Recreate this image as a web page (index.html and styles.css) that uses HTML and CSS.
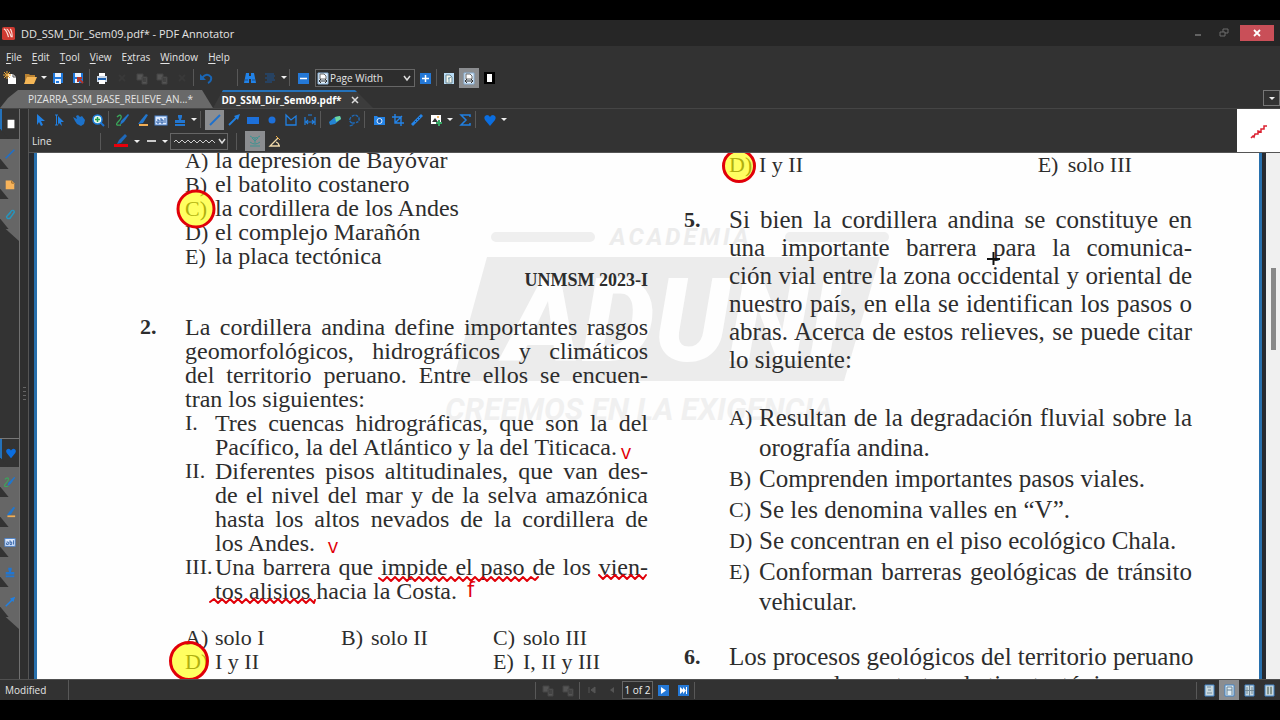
FILE: index.html
```html
<!DOCTYPE html>
<html lang="es">
<head>
<meta charset="utf-8">
<title>DD_SSM_Dir_Sem09.pdf* - PDF Annotator</title>
<link rel="stylesheet" href="styles.css">
</head>
<body>
<svg class="defs" aria-hidden="true">
  <symbol id="new" viewBox="0 0 14 14"><path d="M5 3h5l3 3v7H5z" fill="#fff"/><path d="M10 3v3h3" fill="none" stroke="#555"/><path d="M4 0v8M0 4h8M1 1l6 6M7 1L1 7" stroke="#e9a63a"/></symbol>
  <symbol id="open" viewBox="0 0 14 14"><path d="M2 12V3h4l1 1h5v3" fill="#b98232"/><path d="M4 6h10l-3 7H1z" fill="#f5b757"/></symbol>
  <symbol id="save" viewBox="0 0 14 14"><path d="M2 2h10v10H2z" fill="#1f78dc"/><path d="M4 2h6v4H4zM4 8h6v5H4z" fill="#e8f2ff"/><path d="M5 10h3v2H5z" fill="#1f78dc"/></symbol>
  <symbol id="saveas" viewBox="0 0 14 14"><path d="M2 2h10v10H2z" fill="#1f78dc"/><path d="M4 2h6v4H4zM4 8h4v4H4z" fill="#e8f2ff"/><path d="M7 7l5 5M7 11V7h4" stroke="#b3342b" stroke-width="2" fill="none"/></symbol>
  <symbol id="print" viewBox="0 0 14 14"><path d="M4 2h6v4H4z" fill="#fff"/><path d="M2 5h10v6H2z" fill="#c9d5e4"/><path d="M3 7h8v2H3z" fill="#1b5fae"/><path d="M4 9h6v4H4z" fill="#fff"/></symbol>
  <symbol id="copy" viewBox="0 0 14 14"><path d="M2 3h6v6H2zM7 6h5v7H7z" fill="#555" stroke="#444"/><path d="M8 8h3M8 10h3" stroke="#333"/></symbol>
  <symbol id="cut" viewBox="0 0 14 14"><path d="M4 4l6 6M10 4l-6 6" stroke="#393939" stroke-width="2"/></symbol>
  <symbol id="undo" viewBox="0 0 14 14"><path d="M3 7q5-6 9-1 1 4-3 6" fill="none" stroke="#1a66b5" stroke-width="2"/><path d="M1 3v6h6z" fill="#1a66b5"/></symbol>
  <symbol id="find" viewBox="0 0 14 14"><path d="M3 2h3v3h2V2h3l2 10H8V8H6v4H1z" fill="#2182e8"/><path d="M2 9h3M9 9h3" stroke="#144e92"/></symbol>
  <symbol id="list" viewBox="0 0 14 14"><path d="M2 3h9M4 5h8M2 7h9M4 9h8M2 11h7" stroke="#1c538f" stroke-width="1.2"/></symbol>
  <symbol id="minus" viewBox="0 0 14 14"><path d="M2 2h11v11H2z" fill="#2478d6"/><path d="M4 7.500h7" stroke="#fff" stroke-width="1.500"/></symbol>
  <symbol id="plus" viewBox="0 0 14 14"><path d="M2 2h11v11H2z" fill="#2478d6"/><path d="M4 7.500h7M7.500 4v7" stroke="#fff" stroke-width="1.500"/></symbol>
  <symbol id="page" viewBox="0 0 14 14"><path d="M2 2h10v11H2z" fill="#b9dcf5"/><path d="M4 4h4l2 2v6H4z" fill="#f5f8ee" stroke="#6c8794"/><path d="M6 8l3-2M7 6v5" stroke="#6f99ad"/></symbol>
  <symbol id="pagew" viewBox="0 0 14 14"><path d="M2 2h10v11H2z" fill="#e2effb" stroke="#8bb3d8"/><path d="M4 3h4l2 2v3H4z" fill="#fff" stroke="#666"/><path d="M3 10h8M5 8l-2 2 2 2M9 8l2 2-2 2" stroke="#333" fill="none"/></symbol>
  <symbol id="full" viewBox="0 0 14 14"><path d="M2 1h11v12H2z" fill="#000"/><path d="M5 3h5v8H5z" fill="#fff"/></symbol>
  <symbol id="arrow" viewBox="0 0 14 14"><path d="M3 1l8 7H7l2 4-2 1-2-4-2 3z" fill="#2180e2"/></symbol>
  <symbol id="textarrow" viewBox="0 0 14 14"><path d="M5 3l6 6H8l1 4-3-3-1 2z" fill="#2180e2"/><path d="M2 2h3M3.500 2v10M2 12h3" stroke="#2180e2" fill="none"/></symbol>
  <symbol id="hand" viewBox="0 0 14 14"><path d="M1 4l4 2-1-3 2-1 2 2 2-1 3 4-1 4-3 2-4-2-2-3z" fill="#1d72ca"/></symbol>
  <symbol id="zoomin" viewBox="0 0 14 14"><path d="M9 9l4 4" stroke="#1b72d2" stroke-width="2"/><circle cx="6.500" cy="6.500" r="4.500" fill="#e5f8ef" stroke="#1b7ede" stroke-width="1.500"/><path d="M4 6.500h5M6.500 4v5" stroke="#20a050" stroke-width="1.500"/></symbol>
  <symbol id="pen" viewBox="0 0 14 14"><path d="M13 2L8 9l-4 3 1-4 7-7z" fill="#2276cc"/><path d="M1 4q3-3 4-1T2 9t3 3" fill="none" stroke="#3aa85b" stroke-width="1.300"/></symbol>
  <symbol id="marker" viewBox="0 0 14 14"><path d="M11 1l2 1-5 8-5 1 3-4z" fill="#2276cc"/><path d="M4 11h9v2H4z" fill="#f1ae55"/></symbol>
  <symbol id="abl" viewBox="0 0 14 14"><rect x="1" y="3" width="12" height="9" fill="#dceaff" stroke="#4b83cf"/><path d="M3 7h2v3H3V8M7 5v5h2V7H7M11 5v5" stroke="#2356a0" fill="none"/></symbol>
  <symbol id="stamp" viewBox="0 0 14 14"><path d="M5 2h4v2L8 7h4v3H2V7h4L5 4zM2 11h10v2H2z" fill="#2276d0"/></symbol>
  <symbol id="line" viewBox="0 0 14 14"><path d="M2 12L12 2" stroke="#1d70cc" stroke-width="1.800"/></symbol>
  <symbol id="arr" viewBox="0 0 14 14"><path d="M2 12l8-8" stroke="#2180e2" stroke-width="1.800"/><path d="M13 1l-2 6-4-4z" fill="#2180e2"/></symbol>
  <symbol id="rect" viewBox="0 0 14 14"><path d="M1 4h12v7H1z" fill="#1d70da"/></symbol>
  <symbol id="dot" viewBox="0 0 14 14"><circle cx="7" cy="7" r="3.500" fill="#1d70da"/></symbol>
  <symbol id="poly" viewBox="0 0 14 14"><path d="M2 2l5 5 5-4v9H2z" fill="none" stroke="#2180e2" stroke-width="1.300"/></symbol>
  <symbol id="measure" viewBox="0 0 14 14"><path d="M2 4v8M12 4v8M3 9h8M5 7L3 9l2 2M9 7l2 2-2 2M5 2h4" stroke="#2180e2" fill="none" stroke-width="1.200"/></symbol>
  <symbol id="eraser" viewBox="0 0 14 14"><path d="M1 9l6-5 5-1 1 3-6 5-5 1z" fill="#2484d4"/><path d="M7 4l5-1 1 3-5 3z" fill="#6fd69a"/></symbol>
  <symbol id="lasso" viewBox="0 0 14 14"><path d="M5 10Q1 8 4 4q5-4 8 1 1 5-6 5v2l-4 1" fill="none" stroke="#1f69b5" stroke-width="1.400" stroke-dasharray="3 1"/></symbol>
  <symbol id="camera" viewBox="0 0 14 14"><path d="M2 3h3l1 1h7v8H2z" fill="#2484e8"/><circle cx="7.500" cy="8" r="2.500" fill="#1b5eb4" stroke="#e2f1ff"/></symbol>
  <symbol id="crop" viewBox="0 0 14 14"><path d="M4 1v9h9M1 4h9v9M4 10l7-7" stroke="#2484e8" fill="none" stroke-width="1.400"/></symbol>
  <symbol id="ruler" viewBox="0 0 14 14"><path d="M11 1l2 2-10 10-2-2z" fill="#2484e8"/><path d="M9 4l1 1M7 6l1 1M5 8l1 1" stroke="#14406e"/></symbol>
  <symbol id="image" viewBox="0 0 14 14"><path d="M2 2h10v9H2z" fill="#fff"/><path d="M3 9l3-4 3 4z" fill="#333"/><circle cx="9" cy="4" r="1" fill="#e99c32"/><path d="M10 7v6M7 10h6" stroke="#36a866" stroke-width="2"/></symbol>
  <symbol id="sigma" viewBox="0 0 14 14"><path d="M12 4V2H3l5 5-5 5h9v-2" fill="none" stroke="#2180e2" stroke-width="1.500"/></symbol>
  <symbol id="heart" viewBox="0 0 14 14"><path d="M7 13L2 7q-2-4 2-5 2 0 3 2 1-2 3-2 4 1 2 5z" fill="#0b6ee0"/></symbol>
  <symbol id="redpen" viewBox="0 0 16 16"><path d="M12 1l2 2-6 7-4 1 2-4z" fill="#1e69bb"/><path d="M1 11h14v3H1z" fill="#e8000b"/></symbol>
  <symbol id="snap" viewBox="0 0 14 14"><path d="M2 2q5 4 10 0M2 8q5 4 10 0M2 12h10M7 4v5M4 4l3 3 3-3" fill="none" stroke="#3c9391"/></symbol>
  <symbol id="angle" viewBox="0 0 14 14"><path d="M12 12H2l8-8M8 8q3 1 3 4" fill="none" stroke="#f0d9aa" stroke-width="1.300"/><path d="M8 2l4 4" stroke="#e9a63a"/></symbol>
  <symbol id="note" viewBox="0 0 14 14"><path d="M2 3h7l3 3v7H2z" fill="#f7b35a"/><path d="M9 3v3h3" stroke="#8e6024" fill="none"/></symbol>
  <symbol id="clip" viewBox="0 0 14 14"><path d="M4 9l5-6q3-1 3 2l-5 7q-4 1-4-2l5-5" fill="none" stroke="#2795bd" stroke-width="1.700"/></symbol>
  <symbol id="white" viewBox="0 0 14 14"><path d="M3 2h8v10H3z" fill="#fff"/></symbol>
  <symbol id="first" viewBox="0 0 14 14"><path d="M4 4v6M10 4v6L6 7z" stroke="#555" fill="#555"/></symbol>
  <symbol id="prev" viewBox="0 0 14 14"><path d="M9 4v6L5 7z" fill="#555"/></symbol>
  <symbol id="next" viewBox="0 0 14 14"><path d="M2 2h11v11H2z" fill="#2478d6"/><path d="M5 4v7l5-3.500z" fill="#fff"/></symbol>
  <symbol id="last" viewBox="0 0 14 14"><path d="M2 2h11v11H2z" fill="#2478d6"/><path d="M4 4v7l4-3.500zM7 4v7l3-3.500zM10 4h1v7h-1z" fill="#fff"/></symbol>
  <symbol id="v1" viewBox="0 0 14 14"><path d="M3 2h9v11H3z" fill="#c9d9df" stroke="#4385c9"/><path d="M5 4h4M6 7h3M5 10h5" stroke="#748b99"/></symbol>
  <symbol id="v2" viewBox="0 0 14 14"><path d="M3 2h9v11H3z" fill="#e2edf1" stroke="#4385c9"/><path d="M5 12V4h5v8M5 7h5" stroke="#668399" fill="none"/></symbol>
  <symbol id="v3" viewBox="0 0 14 14"><path d="M3 2h9v11H3z" fill="#c9d9df" stroke="#4385c9"/><path d="M3 7.500h9M7.500 2v11M5 4v7M10 4v7" stroke="#748b99"/></symbol>
  <symbol id="v4" viewBox="0 0 14 14"><path d="M3 2h9v11H3z" fill="#c9d9df" stroke="#4385c9"/><path d="M5.500 4h1v7h-1zM8.500 4h1v7h-1z" stroke="#84958f" fill="#eee"/></symbol>
</svg>

<div class="app">
  <header class="titlebar">
    <svg class="logo" viewBox="0 0 14 14" aria-hidden="true"><rect width="14" height="14" rx="2" fill="#cf3a31"/><path d="M2 2q3 1 5 9M5 2q3 2 5 9M9 2q2 3 2 9" fill="none" stroke="#ffe1da" stroke-width="1.200"/></svg>
    <h1>DD_SSM_Dir_Sem09.pdf* - PDF Annotator</h1>
    <div class="wincontrols">
      <button aria-label="Minimize"><svg viewBox="0 0 12 12"><path d="M3 8h6" stroke="#777" stroke-width="1.500"/></svg></button>
      <button aria-label="Restore"><svg viewBox="0 0 12 12"><path d="M2 5h5v4H2zM5 5V2h5v4H7" fill="none" stroke="#6a6a6a"/></svg></button>
      <button class="close" aria-label="Close"><svg viewBox="0 0 12 12"><path d="M3 3l6 6M9 3L3 9" stroke="#fff" stroke-width="1.800"/></svg></button>
    </div>
  </header>

  <nav class="menu" aria-label="Menu">
    <button><u>F</u>ile</button><button><u>E</u>dit</button><button><u>T</u>ool</button><button><u>V</u>iew</button><button>E<u>x</u>tras</button><button><u>W</u>indow</button><button><u>H</u>elp</button>
  </nav>

  <div class="bar main-bar" role="toolbar" aria-label="Main">
    <button aria-label="New"><svg><use href="#new"/></svg></button>
    <button aria-label="Open"><svg><use href="#open"/></svg></button>
    <button class="caret" aria-label="Open recent"></button>
    <button aria-label="Save"><svg><use href="#save"/></svg></button>
    <button aria-label="Save as"><svg><use href="#saveas"/></svg></button>
    <i class="sep"></i>
    <button aria-label="Print"><svg><use href="#print"/></svg></button>
    <button aria-label="Cut"><svg><use href="#cut"/></svg></button>
    <button aria-label="Copy"><svg><use href="#copy"/></svg></button>
    <button aria-label="Paste"><svg><use href="#copy"/></svg></button>
    <button aria-label="Delete"><svg><use href="#cut"/></svg></button>
    <i class="sep"></i>
    <button aria-label="Undo"><svg><use href="#undo"/></svg></button>
    <button aria-label="Redo"></button>
    <i class="sep"></i>
    <button aria-label="Find"><svg><use href="#find"/></svg></button>
    <button aria-label="Bookmarks"><svg><use href="#list"/></svg></button>
    <button class="caret" aria-label="Bookmark list"></button>
    <i class="sep"></i>
    <button class="zoomout" aria-label="Zoom out"><svg><use href="#minus"/></svg></button>
    <div class="combo"><svg aria-hidden="true"><use href="#pagew"/></svg><select aria-label="Zoom"><option>Page Width</option></select><svg class="chev" viewBox="0 0 8 8" aria-hidden="true"><path d="M1 2l3 4 3-4" fill="none" stroke="#ddd" stroke-width="1.500"/></svg></div>
    <button aria-label="Zoom in"><svg><use href="#plus"/></svg></button>
    <i class="sep"></i>
    <button aria-label="Whole page"><svg><use href="#page"/></svg></button>
    <button class="on" aria-label="Fit width"><svg><use href="#pagew"/></svg></button>
    <button aria-label="Full screen"><svg><use href="#full"/></svg></button>
  </div>

  <div class="tabs" role="tablist">
    <button class="tab" role="tab">PIZARRA_SSM_BASE_RELIEVE_AN...*</button>
    <button class="tab active" role="tab" aria-selected="true">DD_SSM_Dir_Sem09.pdf*<svg viewBox="0 0 8 8" aria-hidden="true"><path d="M1 1l6 6M7 1L1 7" stroke="#ddd" stroke-width="1.500"/></svg></button>
    <button class="tablist" aria-label="Tab list"></button>
  </div>

  <div class="work">
    <aside class="rail">
      <div class="railgroup top">
        <button class="current" aria-label="Pages"><svg><use href="#white"/></svg></button>
        <button aria-label="Annotations"><svg><use href="#line"/></svg></button>
        <button aria-label="Bookmarks"><svg><use href="#note"/></svg></button>
        <button aria-label="Attachments"><svg><use href="#clip"/></svg></button>
      </div>
      <div class="railgroup bottom">
        <button class="current" aria-label="Favorites"><svg><use href="#heart"/></svg></button>
        <button aria-label="Pens"><svg><use href="#pen"/></svg></button>
        <button aria-label="Markers"><svg><use href="#marker"/></svg></button>
        <button aria-label="Texts"><svg><use href="#abl"/></svg></button>
        <button aria-label="Stamps"><svg><use href="#stamp"/></svg></button>
        <button aria-label="Arrows"><svg><use href="#arr"/></svg></button>
      </div>
    </aside>
    <div class="splitter"><i></i></div>

    <main class="content">
      <div class="tools">
        <div class="toolrows">
          <div class="bar tool-bar" role="toolbar" aria-label="Tools">
            <button aria-label="Select"><svg><use href="#arrow"/></svg></button>
            <button aria-label="Select text"><svg><use href="#textarrow"/></svg></button>
            <button aria-label="Pan"><svg><use href="#hand"/></svg></button>
            <button aria-label="Zoom"><svg><use href="#zoomin"/></svg></button>
            <i class="sep"></i>
            <button aria-label="Pen"><svg><use href="#pen"/></svg></button>
            <button aria-label="Marker"><svg><use href="#marker"/></svg></button>
            <button aria-label="Text"><svg><use href="#abl"/></svg></button>
            <button aria-label="Stamp"><svg><use href="#stamp"/></svg></button>
            <button class="caret" aria-label="Stamp list"></button>
            <i class="sep"></i>
            <button class="on" aria-label="Line"><svg><use href="#line"/></svg></button>
            <button aria-label="Arrow"><svg><use href="#arr"/></svg></button>
            <button aria-label="Rectangle"><svg><use href="#rect"/></svg></button>
            <button aria-label="Ellipse"><svg><use href="#dot"/></svg></button>
            <button aria-label="Polygon"><svg><use href="#poly"/></svg></button>
            <button aria-label="Measure"><svg><use href="#measure"/></svg></button>
            <i class="sep"></i>
            <button aria-label="Eraser"><svg><use href="#eraser"/></svg></button>
            <button aria-label="Lasso"><svg><use href="#lasso"/></svg></button>
            <i class="sep"></i>
            <button aria-label="Snapshot"><svg><use href="#camera"/></svg></button>
            <button aria-label="Crop"><svg><use href="#crop"/></svg></button>
            <button aria-label="Ruler"><svg><use href="#ruler"/></svg></button>
            <button aria-label="Insert image"><svg><use href="#image"/></svg></button>
            <button class="caret" aria-label="Image list"></button>
            <button aria-label="Formula"><svg><use href="#sigma"/></svg></button>
            <i class="sep"></i>
            <button aria-label="Favorite"><svg><use href="#heart"/></svg></button>
            <button class="caret" aria-label="Favorite list"></button>
          </div>
          <div class="bar style-bar" role="toolbar" aria-label="Line style">
            <span class="toolname">Line</span>
            <i class="sep"></i>
            <button class="color" aria-label="Color"><svg><use href="#redpen"/></svg></button>
            <button class="caret" aria-label="Colors"></button>
            <button aria-label="Width"><svg viewBox="0 0 14 14"><path d="M3 7h9" stroke="#fff" stroke-width="1.500"/></svg></button>
            <button class="caret" aria-label="Widths"></button>
            <button class="wave" aria-label="Line type"><svg viewBox="0 0 54 14"><path d="M2 8l2-2 3 3 3-3 3 3 3-3 3 3 3-3 3 3 3-3 3 3 3-3 3 3 3-3 3 3" fill="none" stroke="#ccc"/><path d="M47 5l3 4 3-4" fill="none" stroke="#ddd" stroke-width="1.500"/></svg></button>
            <i class="sep"></i>
            <button class="on" aria-label="Snap"><svg><use href="#snap"/></svg></button>
            <button aria-label="Angle"><svg><use href="#angle"/></svg></button>
          </div>
        </div>
        <div class="preview"><svg viewBox="0 0 43 43" aria-hidden="true"><path d="M14 29l2-2 1 1 1-3 3 0 0-3 3 1 0-3 3 0 0-3 3 0" fill="none" stroke="#dc2030" stroke-width="1.500"/></svg></div>
      </div>

      <div class="viewer">
        <div class="page">
          <svg class="watermark" viewBox="0 0 440 200" aria-hidden="true">
            <path d="M53 9h94M347 9h94" stroke="#efefef" stroke-width="10" stroke-linecap="round"/>
            <path d="M44 29h393l-36 124H10z" fill="#ececec"/>
            <text x="167" y="17" class="wm-top">ACADEMIA</text>
            <text x="62" y="133" class="wm-name">ADUNI</text>
            <text x="2" y="192" class="wm-motto">CREEMOS EN LA EXIGENCIA</text>
          </svg>
          <section class="col left">
            <ol class="answers">
              <li><b>A)</b>la depresión de Bayóvar</li>
              <li><b>B)</b>el batolito costanero</li>
              <li><b>C)</b>la cordillera de los Andes</li>
              <li><b>D)</b>el complejo Marañón</li>
              <li><b>E)</b>la placa tectónica</li>
            </ol>
            <p class="source">UNMSM 2023-I</p>
            <article class="question">
              <strong>2.</strong>
              <div>
                <p><span class="j">La cordillera andina define importantes rasgos</span><span class="j">geomorfológicos, hidrográficos y climáticos</span><span class="j">del territorio peruano. Entre ellos se encuen-</span><span class="l">tran los siguientes:</span></p>
                <ol class="items">
                  <li><b>I.</b><span class="j">Tres cuencas hidrográficas, que son la del</span><span class="l">Pacífico, la del Atlántico y la del Titicaca.</span></li>
                  <li><b>II.</b><span class="j">Diferentes pisos altitudinales, que van des-</span><span class="j">de el nivel del mar y de la selva amazónica</span><span class="j">hasta los altos nevados de la cordillera de</span><span class="l">los Andes.</span></li>
                  <li><b>III.</b><span class="j">Una barrera que impide el paso de los vien-</span><span class="l">tos alisios hacia la Costa.</span></li>
                </ol>
                <ol class="choices">
                  <li><b>A)</b>solo I</li><li><b>B)</b>solo II</li><li><b>C)</b>solo III</li>
                  <li><b>D)</b>I y II</li><li class="third"><b>E)</b>I, II y III</li>
                </ol>
              </div>
            </article>
          </section>
          <section class="col right">
            <ol class="pair"><li><b>D)</b>I y II</li><li><b>E)</b>solo III</li></ol>
            <article class="question">
              <strong>5.</strong>
              <div>
                <p><span class="j">Si bien la cordillera andina se constituye en</span><span class="j">una importante barrera para la comunica-</span><span class="j">ción vial entre la zona occidental y oriental de</span><span class="j">nuestro país, en ella se identifican los pasos o</span><span class="j">abras. Acerca de estos relieves, se puede citar</span><span class="l">lo siguiente:</span></p>
                <ol class="options">
                  <li><b>A)</b><span class="j">Resultan de la degradación fluvial sobre la</span><span class="l">orografía andina.</span></li>
                  <li><b>B)</b><span class="l">Comprenden importantes pasos viales.</span></li>
                  <li><b>C)</b><span class="l">Se les denomina valles en “V”.</span></li>
                  <li><b>D)</b><span class="l">Se concentran en el piso ecológico Chala.</span></li>
                  <li><b>E)</b><span class="j">Conforman barreras geológicas de tránsito</span><span class="l">vehicular.</span></li>
                </ol>
              </div>
            </article>
            <article class="question">
              <strong>6.</strong>
              <div><p><span class="j">Los procesos geológicos del territorio peruano</span><span class="l">corresponde a estratos de tipo tectónico,</span></p></div>
            </article>
          </section>
          <svg class="ink" viewBox="0 0 1222 531" aria-hidden="true">
            <g fill="#ff0" fill-opacity=".62" stroke="#e10009" stroke-width="3">
              <circle cx="159" cy="56" r="18"/><circle cx="152" cy="508" r="18.500"/><circle cx="702" cy="13" r="15.500"/>
            </g>
            <g fill="none" stroke="#e10009" stroke-width="2" stroke-linejoin="round" stroke-linecap="round">
              <path d="M342 425l4 3 4-4 4 4 4-4 4 4 4-4 4 4 4-4 4 4 4-4 4 4 4-4 4 4 4-4 4 4 4-4 4 4 4-4 4 4 4-4 4 4 4-4 4 4 4-4 4 4 4-4 4 4 4-4 4 4 4-4 4 4 4-4 4 4 4-4 4 4 4-4 4 4 4-4 4 3 3-3"/>
              <path d="M562 422l4 4 4-4 4 4 4-4 4 4 4-4 4 4 4-4 4 4 4-4 4 4 3-4"/>
              <path d="M173 449l4-3 4 4 4-4 4 4 4-4 4 4 4-4 4 4 4-4 4 4 4-4 4 4 4-4 4 4 4-4 4 4 4-4 4 4 4-4 4 4 4-4 4 4 4-4 4 4 4-4 4 4 1-3"/>
            </g>
            <text x="584" y="306">v</text><text x="291" y="400">v</text><text x="430" y="444" class="f">f</text>
            <path d="M950 106h13M956.500 99v13" stroke="#111" stroke-width="2"/>
          </svg>
        </div>
        <div class="scrollbar"><i></i></div>
      </div>
    </main>
  </div>

  <footer class="status">
    <span class="state">Modified</span>
    <div class="bar pager">
      <i class="sep"></i>
      <button aria-label="Previous view"><svg><use href="#copy"/></svg></button>
      <button aria-label="Next view"><svg><use href="#copy"/></svg></button>
      <i class="sep"></i>
      <button aria-label="First page"><svg><use href="#first"/></svg></button>
      <button aria-label="Previous page"><svg><use href="#prev"/></svg></button>
      <input aria-label="Page" value="1 of 2">
      <button aria-label="Next page"><svg><use href="#next"/></svg></button>
      <button aria-label="Last page"><svg><use href="#last"/></svg></button>
      <i class="sep"></i>
    </div>
    <div class="bar views">
      <i class="sep"></i>
      <button aria-label="Single page"><svg><use href="#v1"/></svg></button>
      <button class="on" aria-label="Continuous"><svg><use href="#v2"/></svg></button>
      <button aria-label="Two pages continuous"><svg><use href="#v3"/></svg></button>
      <button aria-label="Two pages"><svg><use href="#v4"/></svg></button>
    </div>
  </footer>
</div>
</body>
</html>
```

FILE: styles.css
```css
* { box-sizing: border-box; }
body { margin: 0; background: #000; font-family: "Open Sans", "Noto Sans", sans-serif; font-size: 10px; color: #e4e4e4; }
button { border: 0; padding: 0; margin: 0; background: none; color: inherit; font: inherit; display: flex; align-items: center; justify-content: center; flex: none; }
ol { list-style: none; margin: 0; padding: 0; }
p, h1 { margin: 0; }
.defs { display: none; }

.app { height: 100vh; padding: 20px 0; display: flex; flex-direction: column; overflow: hidden; }
.app > * { flex: none; }
.titlebar { height: 26px; background: #262626; display: flex; align-items: center; padding: 0 6px 0 2px; gap: 6px; }
.titlebar h1 { flex: 1; font-size: 11px; font-weight: 400; }
.logo { width: 13px; height: 13px; }
.wincontrols { display: flex; gap: 6px; align-items: center; }
.wincontrols button { width: 20px; height: 16px; }
.wincontrols svg { width: 12px; height: 12px; }
.wincontrols .close { width: 34px; background: #c94f58; }

.menu { height: 21px; background: #323232; display: flex; align-items: center; gap: 10px; padding-left: 6px; }
.menu u { text-underline-offset: 2px; }

.bar { display: flex; align-items: center; }
.bar button { width: 20px; height: 20px; }
.bar svg { width: 14px; height: 14px; }
.bar .caret { width: 8px; }
.caret::before, .tablist::before { content: ""; border: 3px solid transparent; border-top-color: #eee; border-bottom: 0; }
.sep { flex: none; width: 4px; height: 17px; background: linear-gradient(90deg, transparent 1px, #585858 1px, #585858 2px, transparent 2px); }
.on { background: #8b8d90; }
.main-bar { height: 21px; background: #323232; }
.main-bar .zoomout { margin: 0 2px 0 1px; }
.combo { width: 100px; height: 18px; border: 1px solid #666; display: flex; align-items: center; background: #2d2d2d; }
.combo select { appearance: none; flex: 1; min-width: 0; border: 0; padding: 0; background: none; color: #e4e4e4; font: inherit; }
.combo .chev { width: 8px; height: 8px; margin-right: 3px; }

.tabs { height: 21px; padding-top: 2px; background: #323232; border-bottom: 1px solid #454545; display: flex; }
.tab { height: 18px; }
.tabs > .tab:first-child { width: 213px; padding-left: 8px; background: #696969; clip-path: polygon(0 100%, 8px 45%, 18px 0, 202px 0, 100% 100%); }
.tab.active { width: 160px; padding-right: 6px; gap: 9px; border-top: 2px solid #2472bb; background: #3c3c3c; color: #fff; font-weight: 700; clip-path: polygon(0 100%, 10px 0, 142px 0, 100% 100%); }
.tab svg { width: 8px; height: 8px; }
.tablist { width: 17px; height: 16px; margin-left: auto; border: 1px solid #777; }

.app > .work { flex: 1; min-height: 0; display: flex; }
.rail { flex: none; width: 20px; background: #333; border-right: 1px solid #707070; display: flex; flex-direction: column; justify-content: space-between; }
.rail button { width: 100%; height: 30px; background: #666; clip-path: polygon(0 0, 100% 0, 100% 100%, 45% 100%, 0 65%); }
.rail svg { width: 12px; height: 12px; }
.rail .current { background: #333; border-left: 2px solid #2472bb; }
.railgroup::after { content: ""; display: block; height: 12px; background: #666; clip-path: polygon(30% 0, 100% 0, 100% 100%); }
.bottom { border-top: 1px solid #777; padding-bottom: 50px; }
.bottom .current { height: 28px; }
.splitter { flex: none; width: 9px; background: #2f2f2f; display: flex; align-items: center; justify-content: center; border-right: 1px solid #555; }
.splitter i { width: 3px; height: 14px; background: repeating-linear-gradient(#666 0 1px, transparent 1px 4px); }

.content { flex: 1; min-width: 0; display: flex; flex-direction: column; }
.tools { height: 44px; flex: none; display: flex; background: #333; border-bottom: 1px solid #555; }
.toolrows { flex: 1; }
.tool-bar { height: 21px; padding-left: 2px; }
.tool-bar button { width: 19px; }
.tool-bar .caret { width: 10px; }
.tool-bar .sep { width: 6px; }
.style-bar { height: 22px; padding-left: 3px; }
.toolname { width: 67px; }
.style-bar .color { margin-left: 6px; width: 24px; }
.style-bar .color svg { width: 16px; height: 16px; }
.bar .wave { width: 58px; height: 17px; border: 1px solid #666; margin: 0 7px 0 1px; }
.bar .wave svg { width: 54px; }
.wave + .sep { margin-right: 6px; }
.preview { width: 43px; background: #fff; }
.preview svg { display: block; width: 43px; height: 43px; }

.viewer { flex: 1; min-height: 0; display: flex; overflow: hidden; background: #262a30; padding-left: 5px; }
.page { position: relative; flex: 1; min-width: 0; height: 540px; overflow: hidden; background: #fefefe; border: solid #2870ad; border-width: 0 3px; padding: 0 67px 0 103px; display: grid; grid-template-columns: minmax(0, 1fr) minmax(0, 1fr); gap: 36px; color: #2d2d2d; font: 24px/24px "Liberation Serif", serif; }
.scrollbar { flex: none; width: 14px; margin-left: 4px; background: #f0f0f0; padding: 115px 4px 0 5px; }
.scrollbar i { display: block; height: 82px; background: #888; }
.col { position: relative; }
.page b { font-weight: 400; font-size: 22px; }
.j, .l { display: block; white-space: nowrap; }
.j { text-align: justify; text-align-last: justify; }
.left { margin-top: -5px; }
.answers { padding-left: 45px; }
.answers b, .choices b, .pair b { display: inline-block; width: 30px; }
.answers li, .choices li { height: 24px; }
.source { text-align: right; font-size: 18px; font-weight: 700; }
.question { display: flex; }
.question strong { flex: none; width: 45px; font-size: 22px; }
.question > div { flex: 1; min-width: 0; }
.left .question { margin-top: 23px; }
.items li, .options li { display: grid; grid-template-columns: 30px minmax(0, 1fr); }
.items b, .options b { grid-row: 1; white-space: nowrap; }
.items span, .options span { grid-column: 2; }
.choices { margin-top: 23px; display: grid; grid-template-columns: 156px 152px 1fr; font-size: 22px; }
.third { grid-column: 3; }
.pair { padding-left: 45px; display: grid; grid-template-columns: 2fr 1fr; font-size: 22px; }
.right { margin-top: -2px; font-size: 25px; line-height: 28px; }
.right .question { margin-top: 27px; }
.options { margin-top: 29px; line-height: 30px; }
.options li + li { margin-top: 1px; }
.right .question + .question { margin-top: 26px; }

.watermark { position: absolute; left: 406px; top: 75px; width: 440px; height: 200px; overflow: visible; }
.wm-top { font: italic 700 24px Roboto, sans-serif; letter-spacing: 3px; fill: #ececec; }
.wm-name { font: italic 900 116px Roboto, sans-serif; fill: #fefefe; }
.wm-motto { font: italic 700 31px "Liberation Sans Narrow", Roboto, sans-serif; fill: #f0f0f0; }
.ink { position: absolute; left: 0; top: 0; width: 1222px; height: 531px; }
.ink text { font: 20px "Open Sans", sans-serif; fill: #e10009; }
.ink .f { font-size: 22px; }

.status { height: 21px; background: #323232; border-top: 1px solid #505050; display: flex; align-items: center; }
.state { width: 69px; padding-left: 5px; border-right: 1px solid #585858; line-height: 20px; }
.pager { margin-left: 465px; }
.pager input { width: 31px; height: 18px; padding: 0; border: 1px solid #666; background: #2d2d2d; color: #eee; font: inherit; text-align: center; }
.views { padding-right: 1px; margin-left: auto; }
```
